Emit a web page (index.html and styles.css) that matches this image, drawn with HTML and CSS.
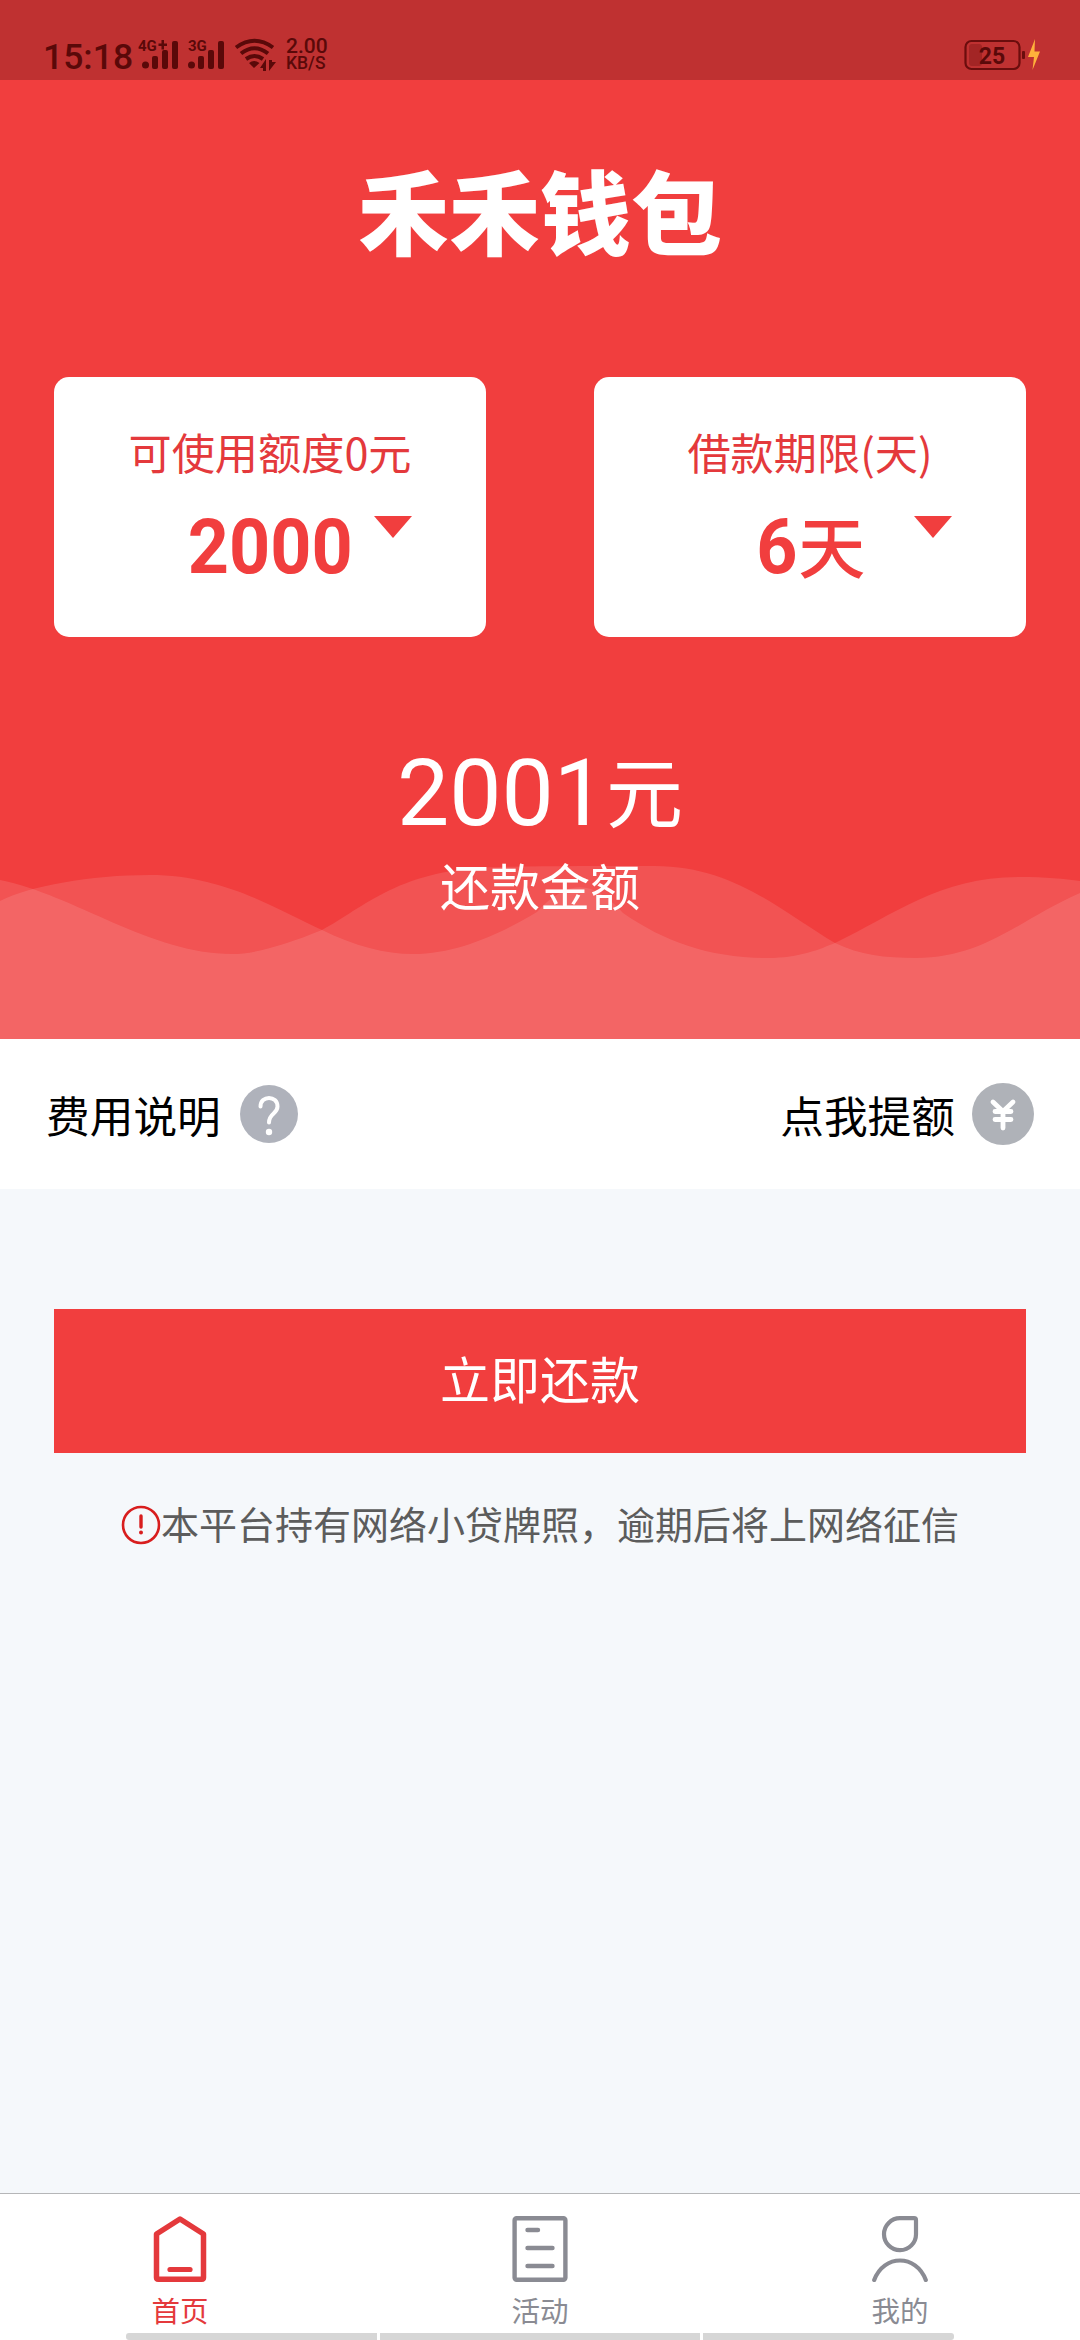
FILE: index.html
```html
<!DOCTYPE html>
<html lang="zh-CN">
<head>
<meta charset="utf-8">
<title>禾禾钱包</title>
<link rel="stylesheet" href="styles.css">
</head>
<body>
<div class="app">
  <header class="status">
    <span class="clock">15:18</span>
    <svg class="signals" width="88" height="32" viewBox="0 0 88 32">
      <g fill="currentColor">
        <text x="0" y="12" class="net">4G</text>
        <path d="M20.500 4.500h3v-3.500h2.500v3.500h3v2.500h-3v3.500h-2.500v-3.500h-3z"/>
        <circle cx="7.500" cy="26" r="3.500"/>
        <rect x="14" y="17" width="6" height="13" rx="2"/>
        <rect x="24" y="11" width="6" height="19" rx="2"/>
        <rect x="34" y="2" width="6" height="28" rx="2"/>
        <text x="50" y="12" class="net">3G</text>
        <circle cx="53.500" cy="26" r="3.500"/>
        <rect x="60" y="17" width="6" height="13" rx="2"/>
        <rect x="70" y="11" width="6" height="19" rx="2"/>
        <rect x="80" y="2" width="6" height="28" rx="2"/>
      </g>
    </svg>
    <svg class="wifi" width="44" height="34" viewBox="0 0 44 34">
      <g fill="none" stroke="currentColor" stroke-width="4">
        <path d="M2 9.500Q20.500-4 39 9.500"/>
        <path d="M7 15.500Q20.500 5 34 15.500"/>
        <path d="M12 21Q20.500 15 29 21"/>
      </g>
      <path fill="currentColor" d="M15 25Q20 21 25.500 25L20 30zM26 30l6-9v12h-3v-3zM35 22v11l7-9h-4v-2z"/>
    </svg>
    <div class="speed"><span>2.00</span><span class="unit">KB/S</span></div>
    <svg class="battery" width="78" height="34" viewBox="0 0 78 34">
      <rect x="1.500" y="3" width="54" height="28" rx="6" fill="none" stroke="#6b0d0d" stroke-width="2.200"/>
      <rect x="5" y="6" width="13" height="22" rx="3" fill="#a32525"/>
      <rect x="58" y="13" width="3" height="8" rx="1" fill="#6b0d0d"/>
      <text x="28" y="26" text-anchor="middle" class="level">25</text>
      <path fill="#ffb13b" d="M71 1L64 19h6l-1.500 13L76 13.500h-5.500z"/>
    </svg>
  </header>

  <main class="content">
    <section class="hero">
      <svg class="waves" width="1080" height="180" viewBox="0 0 1080 180">
        <g fill="#fff" fill-opacity=".11">
          <path d="M0 21C75 36 150 95 232 95C255 95 285 86 322 71C365 48 400 9 500 8C550 7 600 7 655 7C735 7 785 55 835 84C860 96 885 99 916 99C985 99 1020 60 1080 34V180H0z"/>
          <path d="M0 42C30 27 90 16 150 16C225 16 280 52 322 71C355 87 385 95 413 95C460 95 505 72 537 53C568 20 592 20 623 54C665 83 710 99 768 99C800 99 820 90 835 84C895 55 940 18 1020 18C1045 18 1065 20 1080 22V180H0z"/>
        </g>
      </svg>
      <h1 class="logo">禾禾钱包</h1>
      <div class="cards">
        <div class="card">
          <div class="card-label">可使用额度0元</div>
          <div class="card-value"><span class="digits">2000</span></div>
          <i class="arrow"></i>
        </div>
        <div class="card">
          <div class="card-label">借款期限(天)</div>
          <div class="card-value"><span class="digits">6</span><span class="cjk">天</span></div>
          <i class="arrow"></i>
        </div>
      </div>
      <div class="amount">2001<span class="cjk">元</span></div>
      <div class="amount-label">还款金额</div>
    </section>

    <section class="links">
      <div class="link">
        <span>费用说明</span>
        <svg class="help" width="58" height="58" viewBox="0 0 58 58">
          <circle cx="29" cy="29" r="29" fill="#afb2bb"/>
          <path d="M20.500 21.500C20.500 10 37.500 10 37.500 21.500C37.500 29 29 28 29 37.500" fill="none" stroke="#fff" stroke-width="4" stroke-linecap="round"/>
          <circle cx="29" cy="47" r="3.200" fill="#fff"/>
        </svg>
      </div>
      <div class="link">
        <span>点我提额</span>
        <svg class="yen" width="62" height="62" viewBox="0 0 62 62">
          <circle cx="31" cy="31" r="31" fill="#afb2b8"/>
          <path d="M21 19L31 28.500L41 19M31 28.500V45M23 28.500H39M23 36.500H39" fill="none" stroke="#fff" stroke-width="4.800" stroke-linecap="round" stroke-linejoin="round"/>
        </svg>
      </div>
    </section>

    <button class="repay">立即还款</button>
    <p class="notice">
      <svg width="40" height="40" viewBox="0 0 40 40">
        <circle cx="20" cy="20" r="18" fill="none" stroke="#d81e1e" stroke-width="2.600"/>
        <path d="M20 11V22" stroke="#d81e1e" stroke-width="3.400" stroke-linecap="round"/>
        <circle cx="20" cy="27.500" r="2" fill="#d81e1e"/>
      </svg>
      <span>本平台持有网络小贷牌照，逾期后将上网络征信</span>
    </p>
  </main>

  <nav class="tabs">
    <a class="tab active">
      <svg width="56" height="66" viewBox="0 0 56 66">
        <path d="M28 3L51.500 18V61.500Q51.500 63.200 49.800 63.200H6.200Q4.500 63.200 4.500 61.500V18Z" fill="none" stroke="currentColor" stroke-width="5.500" stroke-linejoin="round"/>
        <path d="M18 53.500H38" stroke="currentColor" stroke-width="5.200" stroke-linecap="round"/>
      </svg>
      <span>首页</span>
    </a>
    <a class="tab">
      <svg width="56" height="66" viewBox="0 0 56 66">
        <rect x="2.600" y="2.200" width="50.800" height="61.600" rx="2" fill="none" stroke="currentColor" stroke-width="4.400"/>
        <path d="M15.500 14H26M15.500 32H40.500M15.500 50H40.500" stroke="currentColor" stroke-width="4.400" stroke-linecap="round"/>
      </svg>
      <span>活动</span>
    </a>
    <a class="tab">
      <svg width="56" height="66" viewBox="0 0 56 66">
        <path d="M28 2.200H42Q44 2.200 44 4.200V18A16 16 0 1 1 28 2.200ZM2.200 64C12 38 44 38 53.800 64" fill="none" stroke="currentColor" stroke-width="4.200" stroke-linecap="round"/>
      </svg>
      <span>我的</span>
    </a>
    <div class="gesture"><i></i><i></i><i></i></div>
  </nav>
</div>
</body>
</html>
```

FILE: styles.css
```css
* { box-sizing: border-box; }
body {
  margin: 0;
  font-family: "Noto Sans CJK SC", sans-serif;
  background: #f5f8fb;
}
.app {
  width: 1080px;
  height: 2340px;
  display: flex;
  flex-direction: column;
  overflow: hidden;
}

/* status bar */
.status {
  height: 80px;
  flex: none;
  display: flex;
  align-items: flex-start;
  padding: 0 38px 0 43px;
  background: #bf3131;
  color: #5a0909;
  font-family: Roboto, sans-serif;
}
.clock {
  width: 95px;
  padding-top: 36px;
  font-size: 35.500px;
  line-height: 42px;
  font-weight: 500;
}
.signals { margin-top: 39px; }
.net { font: 700 15px Roboto, sans-serif; }
.wifi { margin: 38px 0 0 8px; }
.speed {
  display: flex;
  flex-direction: column;
  margin: 37px auto 0 8px;
  font-size: 21px;
  line-height: 18px;
  font-weight: 500;
}
.unit { font-size: 17.500px; line-height: 16px; }
.battery { margin-top: 38px; }
.level { font: 700 23px Roboto, sans-serif; fill: #5a0909; }

.content { flex: 1; }

/* red header area */
.hero {
  position: relative;
  height: 959px;
  padding-top: 69px;
  background: #f13e3e;
  color: #fff;
}
.waves {
  position: absolute;
  left: 0;
  bottom: 0;
}
.logo {
  margin: 0;
  height: 120px;
  line-height: 118px;
  text-align: center;
  font-size: 91px;
  font-weight: 900;
}
.cards {
  display: flex;
  justify-content: space-between;
  margin-top: 108px;
  padding: 0 54px;
}
.card {
  position: relative;
  width: 432px;
  height: 260px;
  padding-top: 44px;
  border-radius: 15px;
  background: #fff;
  color: #e4393c;
  text-align: center;
}
.card-label {
  font-size: 43.200px;
  line-height: 60px;
}
.card-value {
  display: flex;
  justify-content: center;
  align-items: baseline;
  margin-top: 21px;
  color: #f13e3e;
}
.digits {
  font: 700 76px/90px Roboto, sans-serif;
  transform: scaleX(.945);
}
.card-value .cjk {
  font-size: 67px;
  line-height: 67px;
  font-weight: 500;
}
.arrow {
  position: absolute;
  top: 139px;
  right: 74px;
  border: solid transparent;
  border-width: 22px 19px 0;
  border-top-color: #f13e3e;
}
.amount {
  display: flex;
  justify-content: center;
  align-items: baseline;
  margin-top: 102px;
  font: 400 93px/110px Roboto, sans-serif;
}
.amount .cjk {
  font: 400 77px/77px "Noto Sans CJK SC", sans-serif;
  transform: translateY(-3px);
}
.amount-label {
  position: relative;
  margin-top: 5px;
  text-align: center;
  font-size: 50px;
  line-height: 60px;
}

/* link row */
.links {
  display: flex;
  justify-content: space-between;
  align-items: center;
  height: 150px;
  padding: 0 46px;
  background: #fff;
  color: #000;
  font-size: 43.700px;
  line-height: 60px;
}
.link { display: flex; align-items: center; }
.help { margin-left: 19px; }
.yen { margin-left: 17px; }

.repay {
  display: block;
  width: 972px;
  height: 144px;
  margin: 120px auto 0;
  padding: 0 0 9px;
  border: 0;
  background: #f13e3e;
  color: #fff;
  font: 400 50px/60px "Noto Sans CJK SC", sans-serif;
}
.notice {
  display: flex;
  justify-content: center;
  align-items: center;
  margin: 48px 0 0;
  color: #5c5c5c;
  font-size: 38px;
  line-height: 50px;
}
.notice span { margin-top: -3px; }

/* bottom tabs */
.tabs {
  position: relative;
  display: flex;
  height: 147px;
  flex: none;
  border-top: 1px solid #b5b6b8;
  background: #fff;
}
.tab {
  flex: 1;
  display: flex;
  flex-direction: column;
  align-items: center;
  padding-top: 22px;
  color: #8a8b93;
  font-size: 28.500px;
  line-height: 40px;
}
.tab svg { margin-bottom: 8px; }
.tab.active { color: #e4393c; }
.gesture {
  position: absolute;
  left: 126px;
  bottom: 0;
  width: 828px;
  display: grid;
  grid-template-columns: 251px 320px 251px;
  gap: 3px;
}
.gesture i { height: 7px; background: #d6d6d6; }
.gesture i:first-child { border-radius: 3px 0 0 3px; }
.gesture i:last-child { border-radius: 0 3px 3px 0; }
```
